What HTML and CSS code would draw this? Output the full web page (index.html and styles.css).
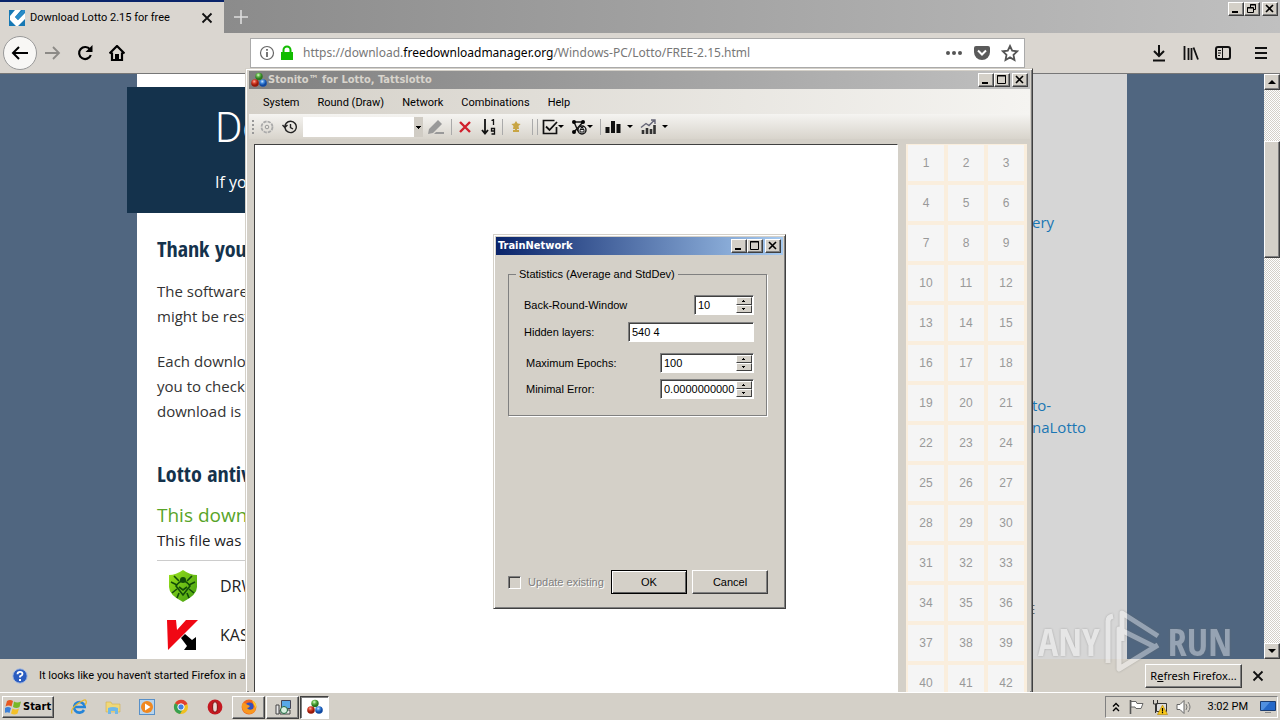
FILE: index.html
```html
<!DOCTYPE html>
<html lang="en">
<head>
<meta charset="utf-8">
<title>Download Lotto 2.15 for free</title>
<link rel="stylesheet" href="styles.css">
</head>
<body>
<svg class="defs" aria-hidden="true">
  <defs>
    <radialGradient id="gr" cx=".4" cy=".3"><stop offset="0" stop-color="#ffb0a0"/><stop offset=".5" stop-color="#d8402a"/><stop offset="1" stop-color="#981808"/></radialGradient>
    <radialGradient id="gg" cx=".4" cy=".3"><stop offset="0" stop-color="#e0ffd0"/><stop offset=".5" stop-color="#62b848"/><stop offset="1" stop-color="#2c7820"/></radialGradient>
    <radialGradient id="gb" cx=".4" cy=".3"><stop offset="0" stop-color="#d0e8ff"/><stop offset=".5" stop-color="#3c88e0"/><stop offset="1" stop-color="#1048a0"/></radialGradient>
    <linearGradient id="gs" x1="0" y1="0" x2="1" y2="1"><stop offset="0" stop-color="#9be41c"/><stop offset="1" stop-color="#3f9a10"/></linearGradient>
    <symbol id="balls" viewBox="0 0 16 16"><circle cx="8" cy="4.500" r="3.700" fill="url(#gg)"/><circle cx="4" cy="11" r="3.800" fill="url(#gr)"/><circle cx="12" cy="11" r="3.800" fill="url(#gb)"/></symbol>
    <symbol id="w-min" viewBox="0 0 14 12"><path d="M3 9h6" stroke="#000" stroke-width="2"/></symbol>
    <symbol id="w-max" viewBox="0 0 14 12"><path d="M2.500 1.500h8v8h-8zM2 2h9" fill="none" stroke="#000"/></symbol>
    <symbol id="w-res" viewBox="0 0 14 12"><path d="M5.500 4V1.500h5v5H8.500M5 2h6M2.500 4.500h6v5h-6zM2 5h6" fill="none" stroke="#000"/></symbol>
    <symbol id="w-x" viewBox="0 0 14 12"><path d="M3 2l7 7M10 2l-7 7" stroke="#000" stroke-width="1.600"/></symbol>
  </defs>
</svg>
<div class="desktop">
  <main class="browser">
    <header class="tabstrip">
      <div class="tab">
        <svg width="16" height="16" viewBox="0 0 16 16"><path fill="#1678b4" d="M0 0h16v16H0z"/><path fill="#fff" d="M6 0h6L6 7l3 3 7-7v6l-7 7H7L1 10V6z"/><path fill="#2a8cc8" d="M14 0l2 0v2L9 10 6 7z"/></svg>
        <span class="tab-title">Download Lotto 2.15 for free</span>
        <button class="plain" aria-label="Close tab"><svg width="12" height="12" viewBox="0 0 12 12"><path d="M1.500 1.500l9 9M10.500 1.500l-9 9" stroke="#111" stroke-width="1.800"/></svg></button>
      </div>
      <button class="plain newtab" aria-label="New tab"><svg width="14" height="14" viewBox="0 0 14 14"><path d="M7 0v14M0 7h14" stroke="#ddd" stroke-width="1.600"/></svg></button>
      <div class="winbtns top">
        <button class="wb" aria-label="Minimize"><svg><use href="#w-min"/></svg></button><button class="wb" aria-label="Restore"><svg><use href="#w-res"/></svg></button><button class="wb close" aria-label="Close"><svg><use href="#w-x"/></svg></button>
      </div>
    </header>
    <nav class="navbar">
      <button class="plain back" aria-label="Back"><svg width="18" height="16" viewBox="0 0 18 16"><path d="M2 8h15M8 2L2 8l6 6" fill="none" stroke="#000" stroke-width="2"/></svg></button>
      <button class="plain nb" aria-label="Forward"><svg width="16" height="16" viewBox="0 0 16 16"><path d="M0 8h14M8 2l6 6-6 6" fill="none" stroke="#8c8a86" stroke-width="1.800"/></svg></button>
      <button class="plain nb" aria-label="Reload"><svg width="16" height="16" viewBox="0 0 16 16"><path d="M13 4.500A6 6 0 1 0 13.800 10" fill="none" stroke="#000" stroke-width="2.200"/><path d="M15.500 0v7H8.500z"/></svg></button>
      <button class="plain nb" aria-label="Home"><svg width="16" height="16" viewBox="0 0 16 16"><path d="M.5 8.500L8 1l7.500 7.500M3 7.500V15h10V7.500" fill="none" stroke="#000" stroke-width="2.200"/><path d="M6 9h4v6H6z"/></svg></button>
      <div class="urlbar">
        <svg width="16" height="16" viewBox="0 0 16 16"><circle cx="8" cy="8" r="6.500" fill="none" stroke="#666" stroke-width="1.200"/><path d="M8 7v5M8 4v1.700" stroke="#555" stroke-width="1.600"/></svg>
        <svg width="14" height="16" viewBox="0 0 14 16"><path d="M1 7h12v8H1z" fill="#12bc00"/><path d="M3.500 8V5a3.500 3.500 0 0 1 7 0v3" fill="none" stroke="#12bc00" stroke-width="2"/></svg>
        <span class="url">https://download.<b>freedownloadmanager.org</b>/Windows-PC/Lotto/FREE-2.15.html</span>
        <svg width="16" height="16" viewBox="0 0 16 16" fill="#555"><circle cx="2" cy="8" r="2"/><circle cx="8" cy="8" r="2"/><circle cx="14" cy="8" r="2"/></svg>
        <svg class="pocket" width="16" height="16" viewBox="0 0 16 16"><path d="M2 1h12q2 0 2 2v4a8 8 0 0 1-16 0V3q0-2 2-2z" fill="#5a5a5a"/><path d="M4 5.500l4 4 4-4" fill="none" stroke="#fff" stroke-width="2"/></svg>
        <svg class="star" width="18" height="18" viewBox="0 0 18 18"><path d="M9 2l2.200 4.700 5 .6-3.700 3.500 1 5.200L9 13.400 4.500 16l1-5.200L1.800 7.300l5-.6z" fill="none" stroke="#555" stroke-width="1.800"/></svg>
      </div>
      <div class="navtools">
        <svg width="16" height="18" viewBox="0 0 16 18"><path d="M8 1v11M3 7l5 5 5-5M2 16.500h12" fill="none" stroke="#111" stroke-width="2"/></svg>
        <svg width="16" height="16" viewBox="0 0 16 16"><path d="M1.500 1v14M5.500 3v12M8.500 3v12M10.500 2.500L15 14.500" fill="none" stroke="#111" stroke-width="1.800"/></svg>
        <svg width="16" height="16" viewBox="0 0 16 16"><rect x="1" y="2" width="14" height="12" rx="2" fill="none" stroke="#111" stroke-width="2"/><path d="M7.500 2v12M3 5.500h3M3 8h3M3 10.500h2" stroke="#111"/></svg>
        <svg class="menu" width="12" height="14" viewBox="0 0 12 14"><path d="M0 2h12M0 7h12M0 12h12" stroke="#111" stroke-width="2"/></svg>
      </div>
    </nav>
    <section class="viewport">
      <div class="page">
        <article class="article">
          <div class="hero"><h1>Do</h1><p>If yo</p></div>
          <h2>Thank you</h2>
          <p class="para">The software<br>might be rest</p>
          <p class="para">Each downlo<br>you to check<br>download is</p>
          <h2 class="h-av">Lotto antiv</h2>
          <p class="clean">This down</p>
          <p class="file">This file was</p>
          <ul class="av">
            <li><svg width="32" height="34" viewBox="0 0 32 34"><path d="M16 1q7 5 14 5v12q0 8-14 15Q2 26 2 18V6q7 0 14-5z" fill="url(#gs)"/><g fill="none" stroke="#124c08" stroke-width="1.600"><path d="M12 12L7 7M20 12l5-5M10 16l-6-3M22 16l6-3M10 20l-5 4M22 20l5 4M12 24l-2 5M20 24l2 5"/><path d="M9 17q7-10 14 0l-7 9z"/><path d="M12 18l4 3 4-3"/></g><circle cx="16" cy="11" r="3" fill="#124c08"/></svg><span>DRW</span></li>
            <li><svg width="34" height="32" viewBox="0 0 34 32"><path fill="#f00814" d="M1 1h9l1 10L20 1h12L2 31z"/><path d="M15 19l4-4 7 6 4-3v13H18l3-4z"/></svg><span>KAS</span></li>
          </ul>
        </article>
        <aside class="side">
          <a href="#" class="s1">ery</a>
          <a href="#" class="s2">to-<br>naLotto</a>
          <span class="s3">E</span>
        </aside>
      </div>
      <div class="scroll">
        <button class="sb" aria-label="Scroll up"><svg width="8" height="4" viewBox="0 0 8 4"><path d="M0 4l4-4 4 4z"/></svg></button>
        <div class="thumb"></div>
        <button class="sb down" aria-label="Scroll down"><svg width="8" height="4" viewBox="0 0 8 4"><path d="M0 0h8L4 4z"/></svg></button>
      </div>
    </section>
    <footer class="notice">
      <svg width="16" height="16" viewBox="0 0 16 16"><circle cx="8" cy="8" r="7.200" fill="#2a5cc0" stroke="#a8bce0"/><path d="M5.500 6.200q0-2.400 2.500-2.400t2.500 2.100Q10.500 7.300 8 8.300v1.200" fill="none" stroke="#fff" stroke-width="1.800"/><path d="M7 11h2v2H7z" fill="#fff"/></svg>
      <span>It looks like you haven't started Firefox in a</span>
      <button class="refresh">R<u>e</u>fresh Firefox...</button>
      <button class="plain" aria-label="Dismiss"><svg width="12" height="12" viewBox="0 0 12 12"><path d="M1.500 1.500l9 9M10.500 1.500l-9 9" stroke="#111" stroke-width="1.800"/></svg></button>
    </footer>
  </main>

  <section class="window app">
    <header class="title inactive">
      <svg class="ic16"><use href="#balls"/></svg><span>Stonito™ for Lotto, Tattslotto</span>
      <div class="winbtns"><button class="wb" aria-label="Minimize"><svg><use href="#w-min"/></svg></button><button class="wb" aria-label="Maximize"><svg><use href="#w-max"/></svg></button><button class="wb close" aria-label="Close"><svg><use href="#w-x"/></svg></button></div>
    </header>
    <nav class="menubar"><button>System</button><button>Round (Draw)</button><button>Network</button><button>Combinations</button><button>Help</button></nav>
    <div class="toolbar">
      <i class="grip"></i>
      <svg class="ic16 t-gear" viewBox="0 0 16 16"><circle cx="8" cy="8" r="5.500" fill="none" stroke="#aaa" stroke-width="1.800" stroke-dasharray="3.300 1"/><circle cx="8" cy="8" r="1.800" fill="none" stroke="#999"/></svg>
      <svg class="ic16 t-clock" viewBox="0 0 16 16"><path d="M3 9a5.700 5.700 0 1 0 1.200-4.700A6 6 0 0 0 2.800 8M.5 6l2.300 2.600L5.500 6M8.500 5v3.500l2.500 1.500" fill="none" stroke="#222" stroke-width="1.400"/></svg>
      <select aria-label="Round"><option></option></select>
      <svg class="ic16 t-pen" viewBox="0 0 16 16"><path d="M0 15l1-5L10 1l4 4-9 9zM8 13h8v2H6z" fill="#999"/></svg>
      <i class="sep"></i>
      <svg class="ic16 t-del" viewBox="0 0 16 16"><path d="M3 3l10 10M13 3L3 13" stroke="#d0202c" stroke-width="2.400"/></svg>
      <svg class="ic16 t-sort" viewBox="0 0 16 16"><path d="M4 0v14M1 11l3 3.500L7 11" fill="none" stroke="#111" stroke-width="1.800"/><path d="M10.500 1.500L12.500.7V6M13.500 12V9.500h-3V12h3v3h-3" fill="none" stroke="#111" stroke-width="1.300"/></svg>
      <i class="sep"></i>
      <svg class="ic16 t-star" viewBox="0 0 16 16"><path d="M8 2l1.600 2.500 3 .4-2.100 2.100.5 3H5l.5-3-2.100-2.100 3-.4zM7 9h2v2H7zM5 11h6v2H5z" fill="#c8a544"/></svg>
      <i class="sep"></i><i class="sep"></i>
      <svg class="ic16" viewBox="0 0 16 16"><path d="M14.500 8v6.500h-13v-13h11" fill="none" stroke="#111" stroke-width="1.700"/><path d="M4 7.500l3.500 3.500L15 3" fill="none" stroke="#111" stroke-width="1.800"/></svg><b class="dd"></b>
      <svg class="ic16 t-net" viewBox="0 0 16 16"><path d="M3 3h9M3 3l4 9M12 3L3 13" fill="none" stroke="#111" stroke-width="1.400"/><circle cx="3" cy="3" r="2"/><circle cx="12" cy="3" r="2"/><circle cx="3" cy="13" r="2"/><circle cx="11" cy="11" r="4" fill="#eee" stroke="#111" stroke-width="1.400"/><path d="M9 10.500h4V13H9zM10 10V8.500h2V10" stroke="#111" fill="none"/></svg><b class="dd"></b>
      <i class="sep"></i>
      <svg class="ic16" viewBox="0 0 16 16"><path d="M2.500 14V8M8 14V2M13.500 14V5" stroke="#111" stroke-width="4"/></svg><b class="dd wide"></b>
      <svg class="ic16 t-chart" viewBox="0 0 16 16"><path d="M3 15v-4M7 15V9M11 15v-5M14.500 15V6" stroke="#333" stroke-width="2.600"/><path d="M1 8.500l5-4 3 2L14.500 1M11 1h4v4" fill="none" stroke="#667" stroke-width="1.400"/></svg><b class="dd wide"></b>
    </div>
    <div class="client">
      <div class="canvas"></div>
      <div class="numbers">
        <span>1</span><span>2</span><span>3</span><span>4</span><span>5</span><span>6</span><span>7</span><span>8</span><span>9</span><span>10</span><span>11</span><span>12</span><span>13</span><span>14</span><span>15</span><span>16</span><span>17</span><span>18</span><span>19</span><span>20</span><span>21</span><span>22</span><span>23</span><span>24</span><span>25</span><span>26</span><span>27</span><span>28</span><span>29</span><span>30</span><span>31</span><span>32</span><span>33</span><span>34</span><span>35</span><span>36</span><span>37</span><span>38</span><span>39</span><span>40</span><span>41</span><span>42</span>
      </div>
    </div>
  </section>

  <form class="window dialog">
    <header class="title active"><span>TrainNetwork</span>
      <div class="winbtns"><button type="button" class="wb" aria-label="Minimize"><svg><use href="#w-min"/></svg></button><button type="button" class="wb" aria-label="Maximize"><svg><use href="#w-max"/></svg></button><button type="button" class="wb close" aria-label="Close"><svg><use href="#w-x"/></svg></button></div>
    </header>
    <fieldset>
      <legend>Statistics (Average and StdDev)</legend>
      <div class="row r1"><label for="brw">Back-Round-Window</label><span class="spin w60"><input id="brw" value="10"><span class="ud"><button type="button" aria-label="Up"></button><button type="button" class="dn" aria-label="Down"></button></span></span></div>
      <div class="row r2"><label for="hid">Hidden layers:</label><span class="spin w126"><input id="hid" value="540 4"></span></div>
      <div class="row r3"><label for="mx">Maximum Epochs:</label><span class="spin w94"><input id="mx" value="100"><span class="ud"><button type="button" aria-label="Up"></button><button type="button" class="dn" aria-label="Down"></button></span></span></div>
      <div class="row r4"><label for="me">Minimal Error:</label><span class="spin w94"><input id="me" value="0.0000000000"><span class="ud"><button type="button" aria-label="Up"></button><button type="button" class="dn" aria-label="Down"></button></span></span></div>
    </fieldset>
    <div class="actions">
      <input type="checkbox" id="upd" disabled><label for="upd">Update existing</label>
      <button type="button" class="btn default">OK</button><button type="button" class="btn">Cancel</button>
    </div>
  </form>

  <footer class="taskbar">
    <button class="start"><svg width="17" height="16" viewBox="0 0 17 16"><path d="M2 2q3-2 6 0L6.500 7.500q-3-2-6 0z" fill="#e85820"/><path d="M9 2.500q3 2 7 0L14.500 8q-3 2-6.500 0z" fill="#78b828"/><path d="M0 9q3-2 6 0l-1.500 5q-2-1.500-5 0z" fill="#3c80d8"/><path d="M7.500 9.500q3 2 6.500 0l-1.500 5q-3 2-6.500 0z" fill="#f4c028"/></svg>Start</button>
    <div class="quick">
      <svg class="ic16" viewBox="0 0 16 16"><path d="M13 11a5.300 5.300 0 1 1 .7-3H4" fill="none" stroke="#2484d8" stroke-width="2.600"/><path d="M1 14.500Q-1 10 7 4.500T15 2q1 2-1 4" fill="none" stroke="#e8b830" stroke-width="1.300"/></svg>
      <svg class="ic16" viewBox="0 0 16 16"><path d="M1 3h5l1 2h8v8H1z" fill="#f0d878" stroke="#d0b050" stroke-width=".6"/><path d="M3 15V9q5-2 10 0v6h-3v-3H6v3z" fill="#70b8e8"/></svg>
      <svg class="ic16" viewBox="0 0 16 16"><rect x=".5" y=".5" width="15" height="15" fill="#b8d4ec" stroke="#5890c8"/><circle cx="8" cy="8" r="6" fill="#f08820"/><path d="M6 4.500v7L11.500 8z" fill="#fff"/></svg>
      <svg class="ic16" viewBox="0 0 16 16"><circle cx="8" cy="8" r="7" fill="#f0c020"/><path d="M8 8L2 4.300A7 7 0 0 1 14.500 5z" fill="#e04030"/><path d="M8 8L2 4.300A7 7 0 0 0 7 15l3-5z" fill="#38a050"/><circle cx="8" cy="8" r="3.200" fill="#4080e0" stroke="#fff"/></svg>
      <svg class="ic16" viewBox="0 0 16 16"><circle cx="8" cy="8" r="7.400" fill="#c41820"/><ellipse cx="8" cy="8" rx="2.400" ry="5.200" fill="#e8d8d4" stroke="#801010"/></svg>
    </div>
    <button class="task" aria-label="Firefox"><svg class="ic16" viewBox="0 0 16 16"><circle cx="8" cy="8" r="7.400" fill="#f06820"/><circle cx="8.500" cy="7.500" r="4" fill="#3050c0"/><path d="M1 5q2-2 4 0l4 2q-1 2-3 2 2 3 6 1l3-5q1 9-6 10Q0 14 1 5z" fill="#f89820"/><path d="M11 1q5 3 4 8l-2-3z" fill="#fcd030"/></svg></button>
    <button class="task" aria-label="Installer"><svg class="ic16" viewBox="0 0 16 16"><path d="M6.500 1.500h9v8h-9z" fill="#58a8e8" stroke="#445"/><path d="M1 6h3v9H1zM5 11h10v4H5z" fill="#e8e8e8" stroke="#444"/><circle cx="9" cy="11" r="3.500" fill="#d8f0e0" stroke="#206840"/></svg></button>
    <button class="task pressed" aria-label="Stonito"><svg class="ic16"><use href="#balls"/></svg></button>
    <div class="tray">
      <svg width="8" height="10" viewBox="0 0 8 10"><path d="M1 4.500l3-3 3 3M1 9l3-3 3 3" fill="none" stroke="#000" stroke-width="1.400"/></svg>
      <svg class="ic16" viewBox="0 0 16 16"><path d="M2.500 1v14" stroke="#555" stroke-width="1.600"/><path d="M3 2.500h5l1 2h6l-2 5H8L7 8H3z" fill="#fff" stroke="#666"/></svg>
      <svg class="ic16" viewBox="0 0 16 16"><path d="M4.500 4.500h10v8h-10z" fill="#ddd" stroke="#333"/><path d="M1.500 1v4h4V1M3.500 5v9" fill="none" stroke="#333"/><path d="M10.500 6l5 9.500h-10z" fill="#f8c818" stroke="#b08000" stroke-width=".6"/><path d="M10.500 9v3.500M10.500 13v1.300" stroke="#000" stroke-width="1.200"/></svg>
      <svg class="ic16" viewBox="0 0 16 16"><path d="M1 5.500h3l4-4v13l-4-4H1z" fill="#fff" stroke="#666"/><path d="M10 5q2 3 0 6M12 3q4 5 0 10" fill="none" stroke="#777"/></svg>
      <time>3:02 PM</time>
      <svg class="ic16 desk" viewBox="0 0 16 16"><path d="M.5 2.500h15v9H.5z" fill="#2468c8" stroke="#1a3c70"/><path d="M1 3h9L3 11H1z" fill="#5090e0"/><path d="M5 13h6v1H5z" fill="#888"/></svg>
    </div>
  </footer>

  <div class="watermark"><span>ANY</span><svg width="58" height="64" viewBox="0 0 58 64"><g fill="none" stroke="#fff" stroke-width="5" stroke-linejoin="round"><path d="M17 32V4L53 27"/><path d="M3 54V12q0-4 5-5"/><path d="M53 36L14 60V20L50 38"/></g></svg><span>RUN</span></div>
</div>
</body>
</html>
```
FILE: styles.css
```css
* { box-sizing: border-box; }
html, body { height: 100%; margin: 0; }
body { font: 11px/14px "Noto Sans", sans-serif; color: #000; overflow: hidden; }
button, input, select { font: inherit; color: inherit; border-radius: 0; margin: 0; }
svg { display: block; flex: none; }
.defs { position: absolute; width: 0; height: 0; }
.ic16 { width: 16px; height: 16px; }
.desktop { position: relative; height: 100%; display: flex; flex-direction: column; overflow: hidden; }
.plain { border: 0; padding: 0; background: none; }
.browser { flex: 1; min-height: 0; display: flex; flex-direction: column; background: #dad6d0; }

.tabstrip { height: 33px; flex: none; display: flex; background: linear-gradient(90deg, #808080, #c0c0c0); }
.tab { width: 224px; background: #dad6d0; border-top: 2px solid #0a246a; padding: 0 11px 0 9px; display: flex; align-items: center; gap: 5px; }
.tab-title { flex: 1; white-space: nowrap; font-family: Roboto, sans-serif; font-size: 11px; }
.newtab { padding: 0 10px; }
.winbtns { margin-left: auto; display: flex; }
.winbtns.top { padding: 2px 2px 0 0; }
.wb { width: 16px; height: 14px; padding: 0; background: #d4d0c8; border: 1px solid; border-color: #fff #404040 #404040 #fff; box-shadow: inset -1px -1px #808080; }
.wb svg { width: 14px; height: 12px; }
.wb.close { margin-left: 2px; }
.navbar { height: 41px; flex: none; display: flex; align-items: center; padding: 0 13px 0 3px; border-bottom: 1px solid #777; }
.back { width: 34px; height: 34px; border: 1px solid #999; border-radius: 50%; background: #f8f7f5; display: grid; place-items: center; margin-right: 8px; }
.nb { margin-right: 16px; }
.urlbar { flex: 1; max-width: 775px; height: 30px; margin-left: 109px; background: #fff; border: 1px solid #aaa; display: flex; align-items: center; padding: 0 5px 0 8px; gap: 5px; }
.url { flex: 1; font-size: 12px; color: #777; margin-left: 4px; white-space: nowrap; }
.url b { font-weight: 400; color: #000; }
.pocket { margin-left: 7px; }
.star { margin-left: 6px; }
.navtools { margin-left: auto; display: flex; align-items: center; gap: 16px; }
.menu { margin-left: 8px; }

.viewport { flex: 1; min-height: 0; display: flex; background: #506680; font-family: "Open Sans", "Noto Sans", sans-serif; }
.page { flex: 1; display: flex; padding: 0 137px; overflow: hidden; }
.article { width: 700px; background: #fff; padding: 13px 20px 0; color: #333; }
.hero { margin: 0 -20px 0 -30px; height: 126px; background: #14324c; color: #fff; padding: 15px 0 0 88px; }
.hero h1 { margin: 0; font: 300 42px/52px "Liberation Sans Narrow", Roboto, sans-serif; }
.hero p { margin: 16px 0 0; font-size: 16px; line-height: 24px; }
h2 { margin: 21px 0 17px; font: 700 22px/28px "Open Sans Condensed", "Open Sans", sans-serif; color: #14324c; white-space: nowrap; }
.para { margin: 0 0 20px; font-size: 15px; line-height: 25px; }
.h-av { margin: 35px 0 14px; }
.clean { margin: 0; font-size: 19px; line-height: 28px; color: #58a428; }
.file { margin: 0; font-size: 15px; line-height: 22px; color: #222; padding-bottom: 9px; border-bottom: 1px solid #ccc; }
.av { list-style: none; margin: 0; padding: 0 0 0 9px; font-size: 16px; color: #222; }
.av li { height: 49px; display: flex; align-items: center; }
.av svg { width: 34px; margin-right: 20px; }
.side { flex: 1; background: #d6d6d6; padding: 137px 0 0 195px; font-size: 15px; line-height: 22px; display: flex; flex-direction: column; }
.side a { color: #1a76b4; text-decoration: none; }
.s2 { margin-top: 161px; }
.s3 { margin: 160px 0 0 -4px; color: #666; font-size: 13px; }
.scroll { width: 16px; display: flex; flex-direction: column; background: repeating-conic-gradient(#fff 0 25%, #d4d0c8 0 50%) 0 0 / 2px 2px; }
.sb { width: 16px; height: 16px; padding: 0; display: grid; place-items: center; background: #d4d0c8; border: 1px solid; border-color: #fff #404040 #404040 #fff; box-shadow: inset -1px -1px #808080; }
.thumb { height: 117px; margin-top: 51px; background: #d4d0c8; border: 1px solid; border-color: #fff #404040 #404040 #fff; box-shadow: inset -1px -1px #808080; }
.down { margin-top: auto; }
.notice { height: 33px; flex: none; display: flex; align-items: center; padding: 0 16px 0 12px; background: #d4d0c8; }
.notice span { margin-left: 11px; font-family: Roboto, sans-serif; white-space: nowrap; }
.refresh { margin: 0 10px 0 auto; height: 24px; width: 97px; padding: 0; white-space: nowrap; background: #d8d4cc; border: 1px solid; border-color: #fff #404040 #404040 #fff; box-shadow: inset -1px -1px #808080; }

.window { position: absolute; background: #d4d0c8; border: 1px solid; border-color: #d4d0c8 #404040 #404040 #d4d0c8; box-shadow: inset 1px 1px #fff, inset -1px -1px #808080; padding: 2px; display: flex; flex-direction: column; }
.title { height: 18px; flex: none; display: flex; align-items: center; padding: 0 2px; font: 700 11px/14px "DejaVu Sans Condensed", "DejaVu Sans", sans-serif; }
.inactive { background: linear-gradient(90deg, #808080, #c0c0c0); color: #d8d4cc; gap: 1px; }
.active { background: linear-gradient(90deg, #0a246a, #a6caf0); color: #fff; }
.app { left: 245px; top: 68px; right: 247px; bottom: 28px; border-bottom: 0; padding: 2px 2px 0 3px; }
.menubar { height: 25px; flex: none; display: flex; align-items: center; padding: 2px 0 0 5px; background: linear-gradient(90deg, #d4d0c8, #f5f4f1); font-family: Roboto, sans-serif; }
.menubar button { border: 0; background: none; padding: 0 9px; white-space: nowrap; }
.toolbar { height: 25px; flex: none; display: flex; align-items: center; padding-left: 3px; background: linear-gradient(#f5f4f1, #d8d4cc); }
.toolbar svg { margin-right: 4px; }
.toolbar .t-gear { margin: 0 7px 0 4px; }
.toolbar .t-clock { margin-right: 5px; }
.grip { width: 2px; height: 14px; border-left: 2px dotted #999; margin-right: 1px; }
.toolbar select { appearance: none; width: 120px; height: 20px; border: 0; margin-right: 5px; background: linear-gradient(#000, #000) 113px 9px / 5px 1px no-repeat, linear-gradient(#000, #000) 114px 10px / 3px 1px no-repeat, linear-gradient(#000, #000) 115px 11px / 1px 1px no-repeat, linear-gradient(90deg, #fff 111px, #d0ccc4 111px); }
.toolbar .t-pen { margin-right: 7px; }
.sep { width: 1px; height: 16px; background: #aaa; margin-right: 4px; }
.toolbar .t-del { margin-left: 1px; }
.toolbar .t-sort { margin: 0 5px 0 4px; }
.toolbar .t-star { margin: 0 8px 0 1px; }
.dd { border: 3px solid transparent; border-top-color: #000; border-bottom: 0; margin: 0 7px 0 -4px; }
.dd.wide { margin-left: 2px; }
.client { flex: 1; min-height: 0; display: flex; gap: 8px; padding: 5px 3px 0 5px; overflow: hidden; background: #d4d0c8; }
.canvas { flex: 1; background: #fff; border: 1px solid #404040; border-right-color: #fff; border-bottom: 0; }
.numbers { width: 121px; display: grid; grid-template-columns: repeat(3, 36px); grid-auto-rows: 36px; gap: 4px; padding: 1px 2px 0; background: #faeedd; font: 12px/36px "Liberation Sans", sans-serif; color: #999; text-align: center; }
.numbers span { background: #f5f5f5; }

.dialog { left: 493px; top: 234px; width: 293px; height: 375px; font: 11px/14px "Liberation Sans", sans-serif; }
fieldset { margin: 12px 16px 0 12px; height: 149px; border: 1px solid #808080; box-shadow: 1px 1px #fff; padding: 14px 12px 0 15px; min-width: 0; }
legend { margin-left: -8px; padding: 0 3px; line-height: 14px; }
.row { display: flex; align-items: center; justify-content: space-between; height: 20px; }
.r2 { margin-top: 7px; }
.r3 { margin-top: 11px; padding-left: 2px; }
.r4 { margin-top: 6px; padding-left: 2px; }
.spin { display: flex; height: 20px; background: #fff; border: 1px solid; border-color: #808080 #fff #fff #808080; box-shadow: inset 1px 1px #404040; padding: 1px; }
.spin input { flex: 1; width: 0; border: 0; padding: 0 0 0 2px; background: none; outline: 0; }
.w60 { width: 60px; } .w94 { width: 94px; } .w126 { width: 126px; }
.ud { width: 16px; display: flex; flex-direction: column; }
.ud button { flex: 1; padding: 0; min-height: 0; border: 1px solid; border-color: #fff #404040 #404040 #fff; background: linear-gradient(#000, #000) 6px 2px / 1px 1px no-repeat, linear-gradient(#000, #000) 5px 3px / 3px 1px no-repeat, #d4d0c8; }
.ud .dn { background: linear-gradient(#000, #000) 5px 2px / 3px 1px no-repeat, linear-gradient(#000, #000) 6px 3px / 1px 1px no-repeat, #d4d0c8; }
.actions { margin-top: auto; padding: 0 15px 12px 12px; display: flex; align-items: center; }
.actions input { appearance: none; width: 13px; height: 13px; border: 1px solid; border-color: #808080 #fff #fff #808080; box-shadow: inset 1px 1px #404040; }
.actions label { flex: 1; margin-left: 7px; color: #808080; text-shadow: 1px 1px #fff; white-space: nowrap; }
.btn { width: 76px; height: 24px; padding: 0; background: #d4d0c8; border: 1px solid; border-color: #fff #404040 #404040 #fff; box-shadow: inset -1px -1px #808080; margin-left: 5px; }
.default { border-color: #000; box-shadow: inset 1px 1px #fff, inset -1px -1px #606060; }

.taskbar { position: relative; height: 28px; flex: none; display: flex; align-items: center; background: #d4d0c8; box-shadow: inset 0 1px #fff; padding: 2px 2px 0; }
.start { width: 52px; height: 22px; padding: 0 2px; display: flex; align-items: center; gap: 1px; font: 700 11px/14px "DejaVu Sans Condensed", "DejaVu Sans", sans-serif; background: #d4d0c8; border: 1px solid; border-color: #fff #404040 #404040 #fff; box-shadow: inset -1px -1px #808080; }
.quick { display: flex; gap: 18px; margin: 0 9px 0 17px; }
.task { width: 33px; height: 23px; padding: 0; margin-right: 1px; display: grid; place-items: center; background: #d4d0c8; border: 1px solid; border-color: #fff #404040 #404040 #fff; box-shadow: inset -1px -1px #808080; }
.pressed { width: 29px; border-color: #404040 #fff #fff #404040; box-shadow: inset 1px 1px #808080; background: #fff; }
.tray { margin-left: auto; height: 22px; display: flex; align-items: center; gap: 8px; padding: 0 1px 0 6px; border: 1px solid; border-color: #808080 #fff #fff #808080; }
.tray time { margin: 0 4px 0 8px; white-space: nowrap; font-family: Roboto, sans-serif; }

.watermark { position: absolute; right: 48px; bottom: 47px; display: flex; align-items: center; gap: 5px; color: #fff; opacity: .4; font: 38px/40px "Open Sans Condensed", "Open Sans", sans-serif; filter: drop-shadow(0 0 1px #666); pointer-events: none; }
```
